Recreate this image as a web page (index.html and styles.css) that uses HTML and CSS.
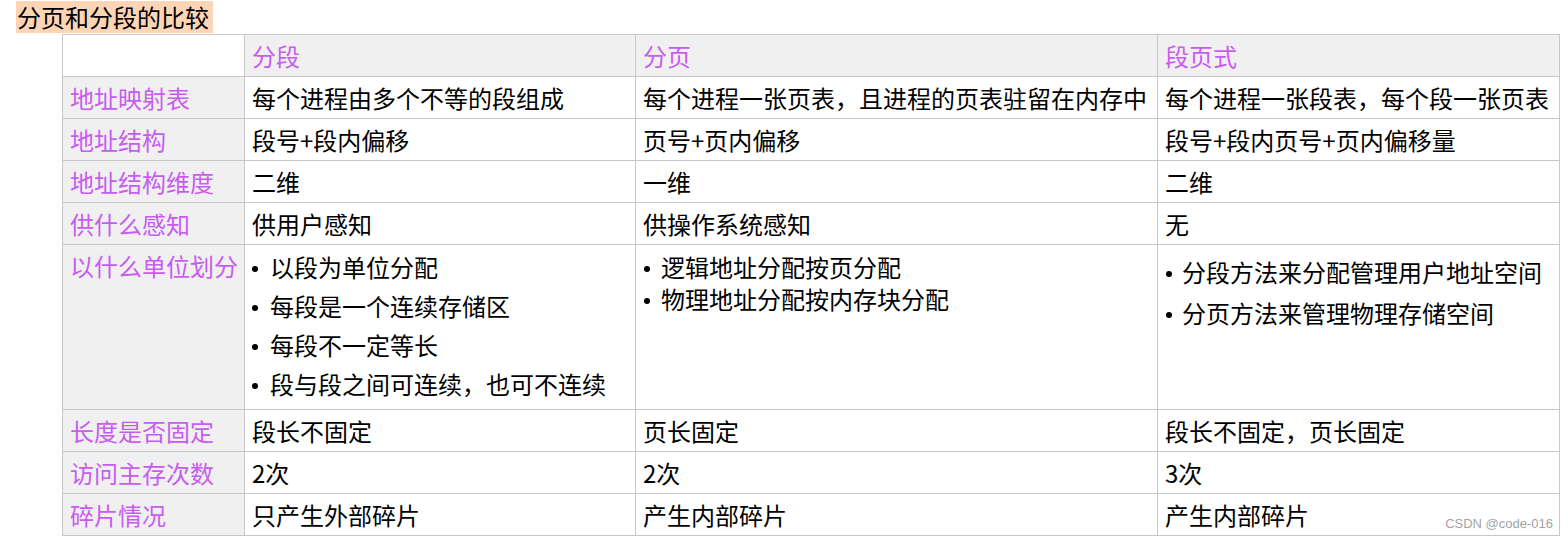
FILE: index.html
```html
<!DOCTYPE html>
<html lang="zh-CN">
<head>
<meta charset="utf-8">
<title>分页和分段的比较</title>
<link rel="stylesheet" href="styles.css">
</head>
<body>
<div class="page">
  <h1 class="title">分页和分段的比较</h1>
  <table class="cmp">
    <colgroup>
      <col class="c1"><col class="c2"><col class="c3"><col class="c4">
    </colgroup>
    <thead>
      <tr>
        <th class="corner"></th>
        <th class="head">分段</th>
        <th class="head">分页</th>
        <th class="head">段页式</th>
      </tr>
    </thead>
    <tbody>
      <tr>
        <th class="label">地址映射表</th>
        <td>每个进程由多个不等的段组成</td>
        <td>每个进程一张页表，且进程的页表驻留在内存中</td>
        <td>每个进程一张段表，每个段一张页表</td>
      </tr>
      <tr>
        <th class="label">地址结构</th>
        <td>段号+段内偏移</td>
        <td>页号+页内偏移</td>
        <td>段号+段内页号+页内偏移量</td>
      </tr>
      <tr>
        <th class="label">地址结构维度</th>
        <td>二维</td>
        <td>一维</td>
        <td>二维</td>
      </tr>
      <tr>
        <th class="label">供什么感知</th>
        <td>供用户感知</td>
        <td>供操作系统感知</td>
        <td>无</td>
      </tr>
      <tr class="tall">
        <th class="label top">以什么单位划分</th>
        <td class="top">
          <ul class="list l-seg">
            <li>以段为单位分配</li>
            <li>每段是一个连续存储区</li>
            <li>每段不一定等长</li>
            <li>段与段之间可连续，也可不连续</li>
          </ul>
        </td>
        <td class="top">
          <ul class="list l-page">
            <li>逻辑地址分配按页分配</li>
            <li>物理地址分配按内存块分配</li>
          </ul>
        </td>
        <td class="top">
          <ul class="list l-mix">
            <li>分段方法来分配管理用户地址空间</li>
            <li>分页方法来管理物理存储空间</li>
          </ul>
        </td>
      </tr>
      <tr>
        <th class="label">长度是否固定</th>
        <td>段长不固定</td>
        <td>页长固定</td>
        <td>段长不固定，页长固定</td>
      </tr>
      <tr>
        <th class="label">访问主存次数</th>
        <td>2次</td>
        <td>2次</td>
        <td>3次</td>
      </tr>
      <tr>
        <th class="label">碎片情况</th>
        <td>只产生外部碎片</td>
        <td>产生内部碎片</td>
        <td>产生内部碎片</td>
      </tr>
    </tbody>
  </table>
  <div class="watermark">CSDN @code-016</div>
</div>
</body>
</html>
```
FILE: styles.css
```css
html, body {
  margin: 0;
  padding: 0;
  background: #ffffff;
}

body {
  font-family: "Noto Sans CJK SC", "Noto Sans", "Liberation Sans", sans-serif;
  color: #000000;
}

.page {
  position: relative;
  width: 1568px;
  height: 538px;
  padding-top: 1px;
  box-sizing: border-box;
  overflow: hidden;
}

.title {
  display: inline-block;
  margin: 0 0 0 16px;
  padding: 0 4px 0 1px;
  height: 32px;
  line-height: 32px;
  font-size: 24px;
  font-weight: normal;
  background: #fcd5b5;
  vertical-align: top;
}

.cmp {
  display: table;
  margin: 1px 0 0 62px;
  border-collapse: collapse;
  table-layout: fixed;
  width: 1497px;
  font-size: 24px;
}

.c1 { width: 182px; }
.c2 { width: 391px; }
.c3 { width: 522px; }
.c4 { width: 402px; }

.cmp th,
.cmp td {
  border: 1px solid #c8c8c8;
  padding: 0 0 0 7px;
  height: 41px;
  line-height: 32px;
  text-align: left;
  vertical-align: middle;
  font-weight: normal;
  white-space: nowrap;
  overflow: hidden;
}

.cmp th.corner {
  background: #ffffff;
}

.cmp th.head,
.cmp th.label {
  background: #f0f0f0;
  color: #c85cf0;
}

.cmp tr.tall th,
.cmp tr.tall td {
  height: 164px;
}

.cmp .top {
  vertical-align: top;
}

.cmp tr.tall th.label.top {
  padding-top: 5px;
  height: 159px;
}

.list {
  list-style: none;
  margin: 0;
  padding: 0;
}

.list li::before {
  content: "";
  display: inline-block;
  width: 6px;
  height: 6px;
  border-radius: 50%;
  background: #000000;
  vertical-align: middle;
  margin-top: -2px;
}

.l-seg { padding-top: 2px; }
.l-seg li { line-height: 39px; }
.l-seg li::before { margin-left: 0; margin-right: 12px; }

.l-page { padding-top: 6px; }
.l-page li { line-height: 32px; }
.l-page li::before { margin-left: 1px; margin-right: 11px; }

.l-mix { padding-top: 6px; }
.l-mix li { line-height: 41px; }
.l-mix li::before { margin-left: 1px; margin-right: 10px; }

.watermark {
  position: absolute;
  right: 15px;
  bottom: 7px;
  font-family: "Liberation Sans", "DejaVu Sans", sans-serif;
  font-size: 13px;
  color: #a3a3a3;
}
```
